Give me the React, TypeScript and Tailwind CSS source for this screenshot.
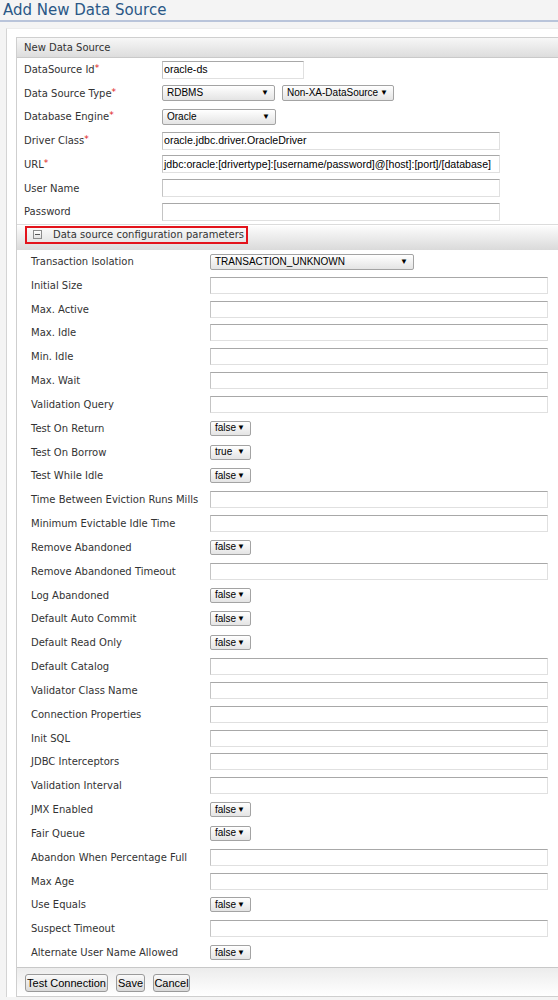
import React from "react";

const LBL = "font-['DejaVu_Sans',sans-serif] text-[10px] text-[#333]";

function Sel({ w, text, h = "h-[16px]" }: { w: string; text: string; h?: string }) {
  return (
    <div
      className={`${w} ${h} flex items-center justify-between rounded-[2px] border border-[#a3a3a3] bg-gradient-to-b from-white to-[#e4e4e4] pl-[4px] pr-[5px] font-['Liberation_Sans',Arial,sans-serif] text-[10px] text-black`}
    >
      <span className="leading-none">{text}</span>
      <span className="text-[8px] leading-none">▼</span>
    </div>
  );
}

function Inp({ w, value = "", h = "h-[18px]" }: { w: string; value?: string; h?: string }) {
  return (
    <div
      className={`${w} ${h} flex items-center overflow-hidden whitespace-nowrap border border-[#e0e0e0] border-t-[#a8a8a8] border-l-[#c4c4c4] bg-white pl-[1px] font-['Liberation_Sans',Arial,sans-serif] text-[10.6px] text-black`}
    >
      {value}
    </div>
  );
}

function Req({ children }: { children: React.ReactNode }) {
  return (
    <span>
      {children}
      <span className="relative top-[-2px] text-[9px] text-[#e02020]">*</span>
    </span>
  );
}

type Row = { label: string; sel?: string };

const inner: Row[] = [
  { label: "Transaction Isolation", sel: "TRANSACTION_UNKNOWN" },
  { label: "Initial Size" },
  { label: "Max. Active" },
  { label: "Max. Idle" },
  { label: "Min. Idle" },
  { label: "Max. Wait" },
  { label: "Validation Query" },
  { label: "Test On Return", sel: "false" },
  { label: "Test On Borrow", sel: "true" },
  { label: "Test While Idle", sel: "false" },
  { label: "Time Between Eviction Runs Mills" },
  { label: "Minimum Evictable Idle Time" },
  { label: "Remove Abandoned", sel: "false" },
  { label: "Remove Abandoned Timeout" },
  { label: "Log Abandoned", sel: "false" },
  { label: "Default Auto Commit", sel: "false" },
  { label: "Default Read Only", sel: "false" },
  { label: "Default Catalog" },
  { label: "Validator Class Name" },
  { label: "Connection Properties" },
  { label: "Init SQL" },
  { label: "JDBC Interceptors" },
  { label: "Validation Interval" },
  { label: "JMX Enabled", sel: "false" },
  { label: "Fair Queue", sel: "false" },
  { label: "Abandon When Percentage Full" },
  { label: "Max Age" },
  { label: "Use Equals", sel: "false" },
  { label: "Suspect Timeout" },
  { label: "Alternate User Name Allowed", sel: "false" },
];

function Btn({ w, children }: { w: string; children: React.ReactNode }) {
  return (
    <div
      className={`${w} flex h-[18px] items-center justify-center rounded-[3px] border border-[#9a9a9a] bg-gradient-to-b from-[#fafafa] to-[#d9d9d9] font-['Liberation_Sans',Arial,sans-serif] text-[11px] text-black`}
    >
      {children}
    </div>
  );
}

export default function App() {
  return (
    <div className="h-[1000px] w-[558px] overflow-hidden bg-[#f4f4f4]">
      <div className="h-[20px] pl-[3px] font-['DejaVu_Sans',sans-serif] text-[15px] leading-[20px] text-[#2a5886]">
        Add New Data Source
      </div>
      <div className="h-[2px] bg-[#b9c4da]" />
      <div className="ml-[6px] mt-[6px] border-l border-t border-l-[#d4d4d4] border-t-[#ececec] bg-white pl-[9px] pt-[8px]">
        <div className="w-[600px] border border-[#cfcfcf] bg-white">
          {/* header */}
          <div className={`flex h-[20px] items-center border-b border-[#c9c9c9] bg-gradient-to-b from-[#f7f7f7] to-[#dddddd] pl-[7px] ${LBL} text-[#222]`}>
            New Data Source
          </div>
          {/* main rows */}
          <div className="flex h-[23.67px] items-center pl-[7px]">
            <div className={`w-[138px] ${LBL}`}><Req>DataSource Id</Req></div>
            <Inp w="w-[142px]" value="oracle-ds" />
          </div>
          <div className="flex h-[23.67px] items-center pl-[7px]">
            <div className={`w-[138px] ${LBL}`}><Req>Data Source Type</Req></div>
            <Sel w="w-[113px]" text="RDBMS" />
            <div className="w-[7px]" />
            <Sel w="w-[112px]" text="Non-XA-DataSource" />
          </div>
          <div className="flex h-[23.67px] items-center pl-[7px]">
            <div className={`w-[138px] ${LBL}`}><Req>Database Engine</Req></div>
            <Sel w="w-[114px]" text="Oracle" />
          </div>
          <div className="flex h-[23.67px] items-center pl-[7px]">
            <div className={`w-[138px] ${LBL}`}><Req>Driver Class</Req></div>
            <Inp w="w-[338px]" value="oracle.jdbc.driver.OracleDriver" />
          </div>
          <div className="flex h-[23.67px] items-center pl-[7px]">
            <div className={`w-[138px] ${LBL}`}><Req>URL</Req></div>
            <Inp w="w-[338px]" value="jdbc:oracle:[drivertype]:[username/password]@[host]:[port]/[database]" />
          </div>
          <div className="flex h-[23.67px] items-center pl-[7px]">
            <div className={`w-[138px] ${LBL}`}>User Name</div>
            <Inp w="w-[338px]" />
          </div>
          <div className="flex h-[23.67px] items-center pl-[7px]">
            <div className={`w-[138px] ${LBL}`}>Password</div>
            <Inp w="w-[338px]" />
          </div>
          {/* config header */}
          <div className="h-[26px] border-t border-[#dcdcdc] pt-[1px]">
            <div className="flex h-[24px] items-start bg-gradient-to-b from-[#fcfcfc] to-[#dadada] pl-[8px]">
              <div className="flex h-[18px] items-center whitespace-nowrap border-2 border-[#e3131b] pl-[6px] pr-[2px]">
                <div className="flex h-[9px] w-[9px] shrink-0 items-center justify-center border border-[#8c8c8c] bg-gradient-to-b from-white to-[#e2e2e2]">
                  <div className="h-px w-[5px] bg-[#555]" />
                </div>
                <span className={`ml-[11px] ${LBL} leading-none text-[#222]`}>Data source configuration parameters</span>
              </div>
            </div>
          </div>
          {/* inner rows */}
          <div className="pb-[3px]">
            {inner.map((r) => (
              <div key={r.label} className="flex h-[23.83px] items-center pl-[14px]">
                <div className={`w-[179px] ${LBL}`}>{r.label}</div>
                {r.sel === "TRANSACTION_UNKNOWN" ? (
                  <Sel w="w-[204px]" text={r.sel} />
                ) : r.sel ? (
                  <Sel w="w-[41px]" h="h-[15px]" text={r.sel} />
                ) : (
                  <Inp w="w-[338px]" h="h-[17px]" />
                )}
              </div>
            ))}
          </div>
          {/* footer */}
          <div className="flex h-[29px] items-start gap-[8px] border-t border-[#c8c8c8] bg-gradient-to-b from-[#ececec] to-white pl-[8px] pt-[6px]">
            <Btn w="w-[83px]">Test Connection</Btn>
            <Btn w="w-[29px]">Save</Btn>
            <Btn w="w-[37px]">Cancel</Btn>
          </div>
        </div>
      </div>
    </div>
  );
}
